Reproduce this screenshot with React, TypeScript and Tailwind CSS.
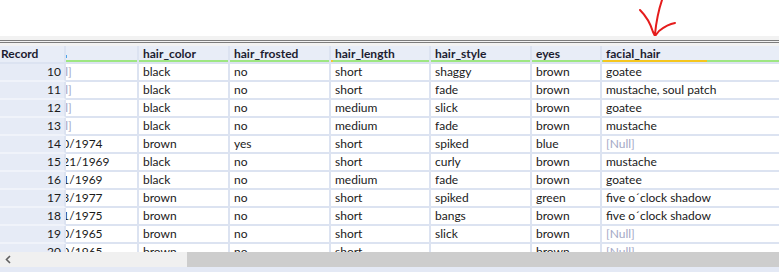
import React from "react";

type Row = {
  rec: number;
  date: string;
  color: string;
  frosted: string;
  length: string;
  style: string;
  eyes: string;
  facial: string;
};

const rows: Row[] = [
  { rec: 10, date: "[Null]", color: "black", frosted: "no", length: "short", style: "shaggy", eyes: "brown", facial: "goatee" },
  { rec: 11, date: "[Null]", color: "black", frosted: "no", length: "short", style: "fade", eyes: "brown", facial: "mustache, soul patch" },
  { rec: 12, date: "[Null]", color: "black", frosted: "no", length: "medium", style: "slick", eyes: "brown", facial: "goatee" },
  { rec: 13, date: "[Null]", color: "black", frosted: "no", length: "medium", style: "fade", eyes: "brown", facial: "mustache" },
  { rec: 14, date: "5/10/1974", color: "brown", frosted: "yes", length: "short", style: "spiked", eyes: "blue", facial: "[Null]" },
  { rec: 15, date: "11/21/1969", color: "black", frosted: "no", length: "short", style: "curly", eyes: "brown", facial: "mustache" },
  { rec: 16, date: "4/11/1969", color: "black", frosted: "no", length: "medium", style: "fade", eyes: "brown", facial: "goatee" },
  { rec: 17, date: "8/13/1977", color: "brown", frosted: "no", length: "short", style: "spiked", eyes: "green", facial: "five o´clock shadow" },
  { rec: 18, date: "7/11/1975", color: "brown", frosted: "no", length: "short", style: "bangs", eyes: "brown", facial: "five o´clock shadow" },
  { rec: 19, date: "2/10/1965", color: "brown", frosted: "no", length: "short", style: "slick", eyes: "brown", facial: "[Null]" },
  { rec: 20, date: "1/20/1965", color: "brown", frosted: "no", length: "short", style: "", eyes: "brown", facial: "[Null]" },
];

const cols = "grid grid-cols-[66px_73px_91px_101px_100px_101px_70px_1fr]";

function Val({ v }: { v: string }) {
  if (v === "[Null]") return <span className="text-[#a3a8c6]">[Null]</span>;
  return <span>{v}</span>;
}

function Cell({ children, last }: { children?: React.ReactNode; last?: boolean }) {
  return (
    <div
      className={
        "h-[18px] overflow-hidden whitespace-nowrap border-b-2 border-[#dce3f1] bg-white pl-[4px] leading-[16px] " +
        (last ? "" : "border-r-2")
      }
    >
      {children}
    </div>
  );
}

function Head({ label, mark }: { label: string; mark?: "blue" | "yellow" }) {
  return (
    <div className="flex h-[18px] flex-col border-b-2 border-r-2 border-[#dce3f1] bg-[#e8edf7]">
      <div className="relative h-[14px] pl-[4px] font-bold leading-[16px] text-[#1c1c30]">
        {label}
        {mark === "blue" && <span className="absolute left-0 top-[9px] h-[3px] w-[1px] bg-[#4aa3e8]" />}
      </div>
      <div className="flex h-[2px] bg-[#9ee682]">
        {mark === "yellow" && <span className="h-[2px] w-[2px] bg-[#f3c534]" />}
      </div>
    </div>
  );
}

export default function App() {
  return (
    <div
      className="flex h-[272px] w-[779px] flex-col overflow-hidden bg-white text-[12px] text-[#1a1a1a]"
      style={{ fontFamily: 'Lato, "Noto Sans", sans-serif' }}
    >
      <div className="h-[36px] shrink-0">
        <svg width="779" height="36" viewBox="0 0 779 36">
          <path
            d="M640 10 C645 15 650 22 653 32 L655 36 L659 31 C664 27 669 24 675 23 M655 34 C656 24 658 12 662 0"
            fill="none"
            stroke="#e51c1c"
            strokeWidth="2"
            strokeLinecap="round"
            strokeLinejoin="round"
          />
        </svg>
      </div>
      <div className="h-[10px] shrink-0 bg-[#f2f2f2] pt-[4px]">
        <div className="h-[1px] bg-[#7c7c7c]" />
        <div className="mt-[1px] h-[1px] bg-[#7c7c7c]" />
      </div>

      <div className="h-[206px] shrink-0 overflow-hidden">
        <div className={cols}>
          <div className="h-[18px] border-b-2 border-r-2 border-[#dce3f1] bg-[#e8edf7] pl-[1px] font-bold leading-[16px] text-[#1c1c30]">
            Record
          </div>
          <Head label="" mark="blue" />
          <Head label="hair_color" />
          <Head label="hair_frosted" />
          <Head label="hair_length" mark="yellow" />
          <Head label="hair_style" />
          <Head label="eyes" />
          <div className="flex h-[18px] flex-col border-b-2 border-[#dce3f1] bg-[#e8edf7]">
            <div className="h-[14px] pl-[4px] font-bold leading-[16px] text-[#1c1c30]">facial_hair</div>
            <div className="flex h-[2px] bg-[#9ee682]">
              <span className="ml-[1px] h-[2px] w-[104px] bg-[#f5c61e]" />
            </div>
          </div>
        </div>
        {rows.map((r) => (
          <div key={r.rec} className={cols}>
            <div className="h-[18px] border-b-2 border-r-2 border-b-[#f0f3fa] border-r-[#dce3f1] bg-[#e6ebf6] pr-[3px] text-right leading-[16px]">
              {r.rec}
            </div>
            <div className="h-[18px] overflow-hidden whitespace-nowrap border-b-2 border-r-2 border-[#dce3f1] bg-white leading-[16px]">
              <div className="ml-[-23px]">
                <Val v={r.date} />
              </div>
            </div>
            <Cell><Val v={r.color} /></Cell>
            <Cell><Val v={r.frosted} /></Cell>
            <Cell><Val v={r.length} /></Cell>
            <Cell><Val v={r.style} /></Cell>
            <Cell><Val v={r.eyes} /></Cell>
            <Cell last><Val v={r.facial} /></Cell>
          </div>
        ))}
      </div>

      <div className="flex h-[15px] shrink-0 bg-[#f0f0f0]">
        <div className="flex w-[187px] items-center pl-[4px]">
          <svg width="8" height="9" viewBox="0 0 8 9">
            <path d="M6 1 L2.5 4.5 L6 8" fill="none" stroke="#606060" strokeWidth="1.6" />
          </svg>
        </div>
        <div className="flex-1 bg-[#cdcdcd]" />
      </div>
      <div className="flex-1 bg-[#e4e9f5]" />
    </div>
  );
}
